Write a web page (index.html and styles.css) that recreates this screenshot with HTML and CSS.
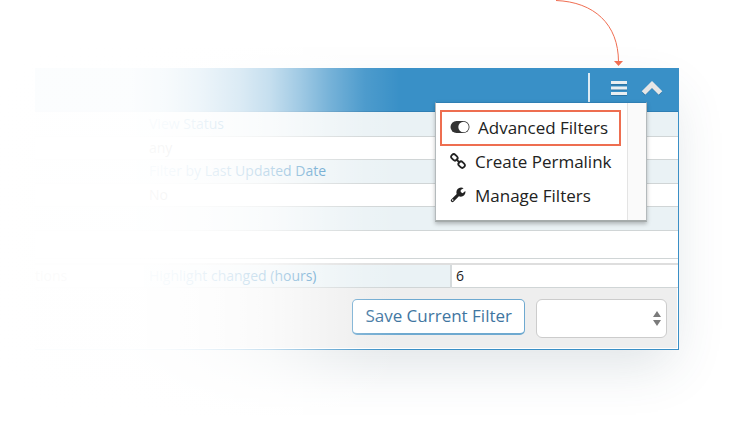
FILE: index.html
```html
<!DOCTYPE html>
<html lang="en">
<head>
<meta charset="utf-8">
<title>Filters</title>
<link rel="stylesheet" href="styles.css">
</head>
<body>
<main class="stage">
  <section class="panel">
    <header class="bar">
      <div class="tools">
        <button class="tool" type="button" aria-label="Filter menu">
          <svg width="18" height="16" viewBox="0 0 18 16"><path class="tool-shade" d="M1 4h16M1 9h16M1 14.500h16"/><path class="tool-line" d="M1 2.500h16M1 8h16M1 13.500h16"/></svg>
        </button>
        <button class="tool" type="button" aria-label="Collapse">
          <svg width="22" height="16" viewBox="0 0 22 16"><path class="chevron-shade" d="M2.500 14 11 5.500 19.500 14"/><path class="chevron" d="M2.500 13 11 4.500 19.500 13"/></svg>
        </button>
      </div>
      <nav class="menu">
        <div class="menu-list">
          <a class="item item-active" href="#advanced">
            <svg width="20" height="14" viewBox="0 0 20 14"><path d="M6.500 1h7a6 6 0 0 1 0 12h-7a6 6 0 0 1 0-12z" fill="#333"/><circle cx="13.500" cy="7" r="5.200" fill="#fff"/></svg>
            <span>Advanced Filters</span>
          </a>
          <a class="item" href="#permalink">
            <svg width="16" height="16" viewBox="0 0 16 16" fill="none" stroke="#222" stroke-width="1.800"><rect x="-3.400" y="-2.500" width="6.800" height="5" rx="2.300" transform="translate(4.400 4.400) rotate(45)"/><rect x="-3.400" y="-2.500" width="6.800" height="5" rx="2.300" transform="translate(11.600 11.600) rotate(45)"/><path d="m6 6 4 4"/></svg>
            <span>Create Permalink</span>
          </a>
          <a class="item" href="#manage">
            <svg width="16" height="16" viewBox="0 0 16 16"><path fill="#222" d="M15.300 4.100c.6 2.700-1.300 5.600-4.500 5.600-.7 0-1.300-.1-1.900-.4l-5.400 5.400c-1.500 1.400-3.700-.7-2.300-2.200l5.500-5.400C5.600 4 7.500.6 11 .5c1 0 1.900.2 2.600.7l-2.900 1.700v2.200l1.900 1.100zM2.700 12.300a.8.800 0 1 0 .01 1.600.8.800 0 0 0-.01-1.600z"/></svg>
            <span>Manage Filters</span>
          </a>
        </div>
      </nav>
    </header>
    <table class="grid">
      <colgroup><col class="col-first"><col class="col-label"><col></colgroup>
      <tbody>
        <tr><th></th><th colspan="2">View Status</th></tr>
        <tr><td></td><td colspan="2">any</td></tr>
        <tr><th></th><th colspan="2">Filter by Last Updated Date</th></tr>
        <tr><td></td><td colspan="2">No</td></tr>
        <tr><th></th><th colspan="2"></th></tr>
        <tr class="tall"><td></td><td colspan="2"></td></tr>
        <tr class="spacer"><td colspan="3"></td></tr>
        <tr><td class="cut">tions</td><th>Highlight changed (hours)</th><td class="value">6</td></tr>
      </tbody>
    </table>
    <footer class="actions">
      <button class="save" type="button">Save Current Filter</button>
      <div class="picker">
        <select aria-label="Saved filter"><option></option></select>
        <svg width="8" height="16" viewBox="0 0 8 16"><path d="M4 0 8 6H0zM0 9h8l-4 6z" fill="#7b7b7b"/></svg>
      </div>
    </footer>
  </section>
  <svg class="pointer" width="70" height="68" viewBox="0 0 70 68"><path d="M2 .5C40 2 64.500 24 64.500 62" fill="none" stroke="#f06e52"/><path d="M60 61h9l-4.500 5z" fill="#f06e52"/></svg>
</main>
</body>
</html>
```
FILE: styles.css
```css
* { box-sizing: border-box; }
body {
  margin: 0;
  background: #fff;
  font-family: "Open Sans", sans-serif;
  font-size: 14px;
  color: #222;
}
.stage {
  position: relative;
  min-height: 100vh;
  padding: 68px 55px 75px 35px;
  overflow: hidden;
}
.stage::after {
  content: "";
  position: absolute;
  inset: 0 auto 0 0;
  width: 410px;
  pointer-events: none;
  background: linear-gradient(90deg, rgba(255,255,255,.98) 0, rgba(255,255,255,.98) 130px, rgba(255,255,255,.96) 165px, rgba(255,255,255,.91) 200px, rgba(255,255,255,.82) 240px, rgba(255,255,255,.71) 270px, rgba(255,255,255,.52) 300px, rgba(255,255,255,.31) 330px, rgba(255,255,255,.1) 365px, rgba(255,255,255,0) 400px);
}
.panel {
  border: solid #3a8fc6;
  border-width: 0 1px 1px 0;
  background: #fff;
  box-shadow: 0 22px 50px -8px rgba(50, 80, 100, .16);
}
.bar {
  position: relative;
  display: flex;
  justify-content: flex-end;
  height: 44px;
  background: #3990c7;
  border-bottom: 1px solid #2f7fb4;
}
.tools {
  display: flex;
  align-items: flex-start;
  gap: 13px;
  margin-top: 5px;
  padding: 7px 15px 0 20px;
  border-left: 2px solid #dcebf4;
}
.tool {
  padding: 0;
  border: 0;
  background: none;
}
.tool svg { display: block; fill: none; }
.tool-line { stroke: #e9eef1; stroke-width: 3; }
.tool-shade { stroke: #2b74a5; stroke-width: 3; }
.chevron { stroke: #e6e6e6; stroke-width: 5; }
.chevron-shade { stroke: #2b74a5; stroke-width: 4; }
.menu {
  position: absolute;
  z-index: 1;
  top: 34px;
  right: 31px;
  padding-right: 18px;
  background: #fafafa;
  border: 1px solid #b4babc;
  border-top-color: #2f7fb4;
  border-bottom: 2px solid #a5abab;
  box-shadow: 0 2px 4px rgba(0, 0, 0, .25);
}
.menu-list {
  display: flex;
  flex-direction: column;
  width: 192px;
  padding: 7px 6px 6px 4px;
  background: #fff;
  border-right: 1px solid #e4e4e4;
}
.item {
  display: flex;
  align-items: center;
  gap: 9px;
  height: 34px;
  padding: 0 0 4px 10px;
  font-size: 17px;
  color: #222;
  text-decoration: none;
  white-space: nowrap;
}
.item-active {
  gap: 8px;
  height: 36px;
  padding: 0 0 2px 8px;
  border: 2px solid #ee6e50;
}
.grid {
  width: 100%;
  border-collapse: collapse;
  table-layout: fixed;
}
.col-first { width: 109px; }
.col-label { width: 307px; }
.grid tr { height: 24px; }
.grid tr:nth-child(even) { height: 23px; }
.grid th, .grid td {
  padding: 1px 5px;
  border-bottom: 1px solid #d0d5d6;
  line-height: 20px;
  font-weight: 400;
  text-align: left;
}
.grid th { background: #eaf2f5; color: #2f85bd; }
.grid tr.tall { height: 28px; }
.grid tr.spacer { height: 6px; }
.grid .spacer td { border-bottom: 2px solid #dedede; padding: 0; line-height: 4px; }
.grid .cut { padding-left: 0; }
.grid .value { border-left: 2px solid #d5dadc; padding-left: 4px; }
.actions {
  display: flex;
  justify-content: flex-end;
  align-items: flex-start;
  gap: 11px;
  padding: 11px 10px 10px;
  background: #eee;
  border-right: 1px solid #fff;
  border-bottom: 1px solid #fff;
}
.save {
  height: 36px;
  padding: 0 12px 2px;
  border: 1px solid #6ea9d0;
  border-bottom-width: 2px;
  border-radius: 5px;
  background: #fff;
  color: #3f76a1;
  font-family: inherit;
  font-size: 17px;
}
.picker { position: relative; width: 131px; }
.picker select {
  display: block;
  width: 100%;
  height: 39px;
  border: 1px solid #ccc;
  border-radius: 6px;
  background: #fff;
  appearance: none;
}
.picker svg { position: absolute; top: 12px; right: 6px; pointer-events: none; }
.pointer { position: absolute; top: 0; right: 110px; }
```
